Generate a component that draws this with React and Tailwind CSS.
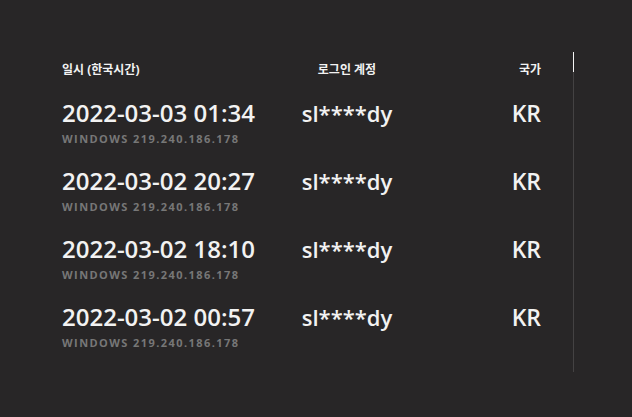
const logins = [
  { date: '2022-03-03 01:34', device: 'WINDOWS 219.240.186.178', account: 'sl****dy', country: 'KR' },
  { date: '2022-03-02 20:27', device: 'WINDOWS 219.240.186.178', account: 'sl****dy', country: 'KR' },
  { date: '2022-03-02 18:10', device: 'WINDOWS 219.240.186.178', account: 'sl****dy', country: 'KR' },
  { date: '2022-03-02 00:57', device: 'WINDOWS 219.240.186.178', account: 'sl****dy', country: 'KR' },
]

export default function App() {
  return (
    <div
      className="w-[632px] h-[417px] bg-[#282627] text-[#f2f2f2] flex"
      style={{ fontFamily: '"Open Sans", "Noto Sans CJK KR", sans-serif' }}
    >
      <div className="w-[573px] pl-[62px] pr-[32px] pt-[62px]">
        {/* Header */}
        <div className="flex items-center h-[16px] text-[12px] font-bold">
          <div className="w-[220px]">일시 (한국시간)</div>
          <div className="w-[130px] text-center">로그인 계정</div>
          <div className="flex-1 text-right">국가</div>
        </div>

        {/* Rows */}
        <div className="mt-[20px] flex flex-col gap-[20px]">
          {logins.map((row) => (
            <div key={row.date} className="flex items-start">
              <div className="w-[220px]">
                <div className="text-[24px] leading-[30px] font-semibold">{row.date}</div>
                <div className="mt-[4px] text-[11px] leading-[14px] font-bold tracking-[0.13em] text-[#777777]">
                  {row.device}
                </div>
              </div>
              <div className="w-[130px] text-center text-[22px] leading-[30px] font-semibold">
                {row.account}
              </div>
              <div className="flex-1 text-right text-[23px] leading-[30px] font-semibold">
                {row.country}
              </div>
            </div>
          ))}
        </div>
      </div>

      {/* Scrollbar */}
      <div className="pt-[52px]">
        <div className="w-px h-[320px] bg-[#444243] flex flex-col">
          <div className="w-px h-[20px] bg-[#f4f4f4]" />
        </div>
      </div>
    </div>
  )
}
